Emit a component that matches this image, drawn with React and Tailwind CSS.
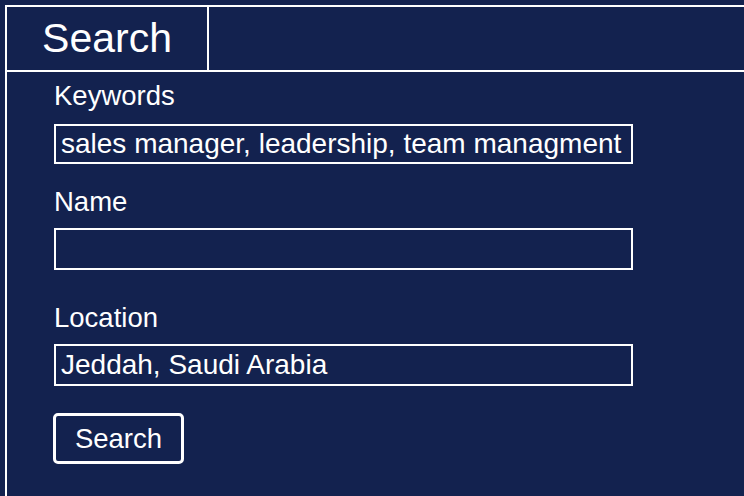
export default function App() {
  return (
    <div className="h-[496px] w-[744px] overflow-hidden bg-[#13224f] pl-[5px] pt-[5px] font-['Liberation_Sans',Arial,sans-serif] text-white">
      <div className="h-full border-l-2 border-t-2 border-white">
        {/* Tab header */}
        <div className="flex h-[65px] border-b-2 border-white">
          <div className="flex w-[202px] items-center justify-center border-r-2 border-white text-[41px]">
            Search
          </div>
        </div>

        {/* Form */}
        <div className="pl-[47px]">
          <div className="mt-[8px]">
            <label className="block text-[27.5px] leading-[31px]">Keywords</label>
            <input
              type="text"
              defaultValue="sales manager, leadership, team managment"
              className="mt-[13px] block h-[40px] w-[579px] border-2 border-white bg-transparent pl-[5px] text-[28px] text-white outline-none"
            />
          </div>
          <div className="mt-[22px]">
            <label className="block text-[27.5px] leading-[31px]">Name</label>
            <input
              type="text"
              defaultValue=""
              className="mt-[11px] block h-[42px] w-[579px] border-2 border-white bg-transparent pl-[5px] text-[28px] text-white outline-none"
            />
          </div>
          <div className="mt-[32px]">
            <label className="block text-[27.5px] leading-[31px]">Location</label>
            <input
              type="text"
              defaultValue="Jeddah, Saudi Arabia"
              className="mt-[11px] block h-[42px] w-[579px] border-2 border-white bg-transparent pl-[5px] text-[28px] text-white outline-none"
            />
          </div>
          <button className="-ml-px mt-[27px] flex h-[51px] w-[131px] items-center justify-center rounded-[5px] border-[3px] border-white text-[27.5px] text-white">
            Search
          </button>
        </div>
      </div>
    </div>
  );
}
